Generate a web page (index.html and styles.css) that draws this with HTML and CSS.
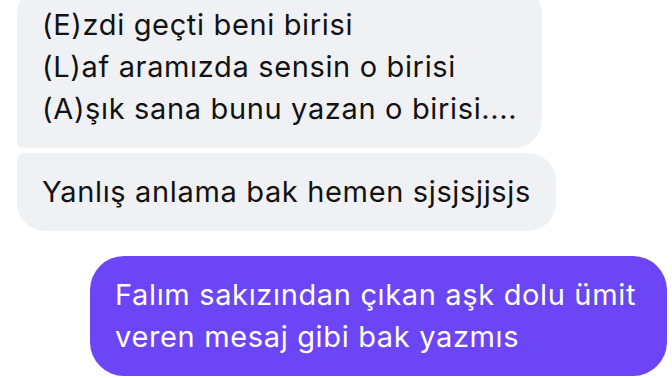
FILE: index.html
```html
<!DOCTYPE html>
<html lang="tr">
<head>
    <meta charset="UTF-8">
    <meta name="viewport" content="width=device-width, initial-scale=1.0">
    <title>Mesajlar</title>
    <link rel="stylesheet" href="styles.css">
</head>
<body>

<div class="thread">
    <div class="group incoming">
        <div class="bubble first">
            <p>(E)zdi geçti beni birisi</p>
            <p>(L)af aramızda sensin o birisi</p>
            <p>(A)şık sana bunu yazan o birisi....</p>
        </div>
        <div class="bubble last">
            <p>Yanlış anlama bak hemen sjsjsjjsjs</p>
        </div>
    </div>

    <div class="group outgoing">
        <div class="bubble single">
            <p>Falım sakızından çıkan aşk dolu ümit veren mesaj gibi bak yazmıs</p>
        </div>
    </div>
</div>

</body>
</html>
```

FILE: styles.css
```css
body {
    font-family: Inter, "Noto Sans", sans-serif;
    background: #fff;
    margin: 0;
    padding: 0;
    overflow: hidden;
}
.thread {
    display: flex;
    flex-direction: column;
    gap: 25px;
    margin-top: -14px;
    padding: 0 5px 0 17px;
}
.group {
    display: flex;
    flex-direction: column;
    gap: 5px;
}
.incoming {
    align-items: flex-start;
}
.outgoing {
    align-items: flex-end;
}
.bubble {
    padding: 18px 25px;
    font-size: 29px;
    line-height: 42px;
    letter-spacing: 0.65px;
}
.bubble p {
    margin: 0;
}
.incoming .bubble {
    background-color: #f0f1f4;
    color: #121212;
    border-radius: 28px;
}
.incoming .first {
    border-bottom-left-radius: 6px;
}
.incoming .last {
    border-top-left-radius: 6px;
}
.outgoing .bubble {
    background-color: #6c45f6;
    color: #fff;
    border-radius: 34px;
    max-width: 527px;
}
```
